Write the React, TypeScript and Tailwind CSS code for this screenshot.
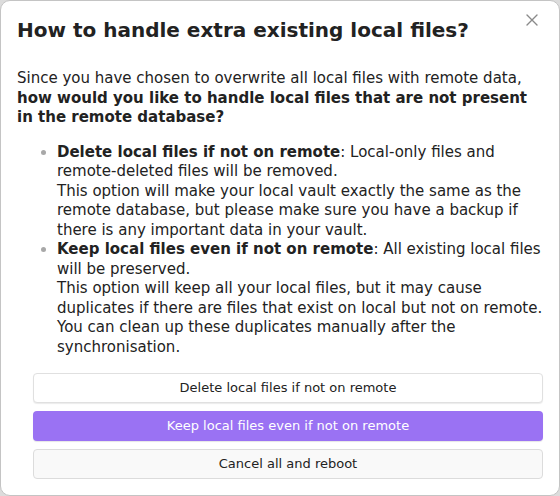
import React from "react";

export default function App() {
  return (
    <div className="w-[560px] h-[496px] bg-[#dcdcdc]" style={{ fontFamily: '"DejaVu Sans", sans-serif' }}>
      <div className="relative w-full h-full bg-white border border-[#c4c4c4] rounded-[10px] px-4 pt-4 pb-4 text-[#222222] flex flex-col">
        <button className="absolute top-[7px] right-[15px] w-6 h-6 flex items-center justify-center text-[#8a8a8a]">
          <svg width="12" height="12" viewBox="0 0 12 12" fill="none" stroke="currentColor" strokeWidth="1.4" strokeLinecap="round">
            <path d="M1 1L11 11M11 1L1 11" />
          </svg>
        </button>
        <h1 className="text-[20px] leading-[26px] font-bold">How to handle extra existing local files?</h1>
        <div className="mt-[26px] text-[15px] leading-[19.5px]">
          <p>
            Since you have chosen to overwrite all local files with remote data,{" "}
            <b className="font-bold">how would you like to handle local files that are not present in the remote database?</b>
          </p>
          <ul className="mt-[15px] pl-10 list-disc marker:text-[#a8a8a8]">
            <li>
              <b className="font-bold">Delete local files if not on remote</b>: Local-only files and remote-deleted files will be removed.
              <br />
              This option will make your local vault exactly the same as the remote database, but please make sure you have a backup if there is any important data in your vault.
            </li>
            <li>
              <b className="font-bold">Keep local files even if not on remote</b>: All existing local files will be preserved.
              <br />
              This option will keep all your local files, but it may cause duplicates if there are files that exist on local but not on remote. You can clean up these duplicates manually after the synchronisation.
            </li>
          </ul>
        </div>
        <div className="mt-[16px] ml-4 flex flex-col gap-2 text-[13px]">
          <button className="h-[30px] rounded-[4px] bg-white border border-[#e0e0e0] shadow-[0_1px_1px_rgba(0,0,0,0.08)] text-[#222222]">
            Delete local files if not on remote
          </button>
          <button className="h-[30px] rounded-[4px] bg-[#9a72f3] text-white shadow-[0_1px_1px_rgba(0,0,0,0.1)]">
            Keep local files even if not on remote
          </button>
          <button className="h-[30px] rounded-[4px] bg-[#f9f9f9] border border-[#dcdcdc] text-[#222222]">
            Cancel all and reboot
          </button>
        </div>
      </div>
    </div>
  );
}
